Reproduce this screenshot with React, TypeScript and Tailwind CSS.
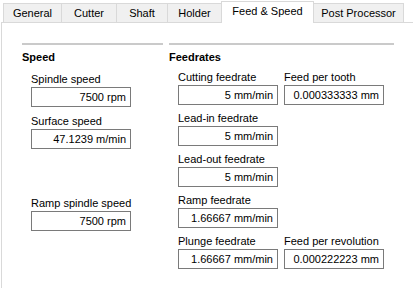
const tabs = ['General', 'Cutter', 'Shaft', 'Holder', 'Feed & Speed', 'Post Processor'];
const tabWidths: Record<string, string> = {
  General: 'w-[58px]',
  Cutter: 'w-[55px]',
  Shaft: 'w-[51px]',
  Holder: 'w-[54px]',
  'Feed & Speed': 'w-[93px]',
  'Post Processor': 'w-[90px]',
};

function Field({ label, value, className = '' }: { label: string; value: string; className?: string }) {
  return (
    <div className={className}>
      <div className="leading-[14px] h-[14px] whitespace-nowrap">{label}</div>
      <div className="mt-[1px] w-[100px] h-[20px] border border-[#7a7a7a] bg-white text-right pr-[4px] leading-[18px] whitespace-nowrap">
        {value}
      </div>
    </div>
  );
}

function Section({ title }: { title: string }) {
  return (
    <>
      <div className="h-[2px] bg-[#cacaca]" />
      <div className="mt-[5px] h-[14px] leading-[14px] font-bold">{title}</div>
    </>
  );
}

export default function App() {
  return (
    <div
      className="w-[413px] h-[288px] bg-white text-black text-[11px] overflow-hidden flex flex-col"
      style={{ fontFamily: '"Liberation Sans", Arial, sans-serif' }}
    >
      <div className="h-[22px] flex items-end pl-[3px] shrink-0">
        {tabs.map((t) => {
          const active = t === 'Feed & Speed';
          const after = t === 'Post Processor';
          return (
            <div
              key={t}
              className={`${tabWidths[t]} flex items-center justify-center border-t border-[#d9d9d9] ${
                active
                  ? 'h-[22px] -mb-px relative z-10 bg-white border-l border-r pb-[2px]'
                  : `h-[19px] bg-[#f0f0f0] ${after ? 'border-r' : 'border-l'}`
              }`}
            >
              {t}
            </div>
          );
        })}
      </div>

      <div className="flex-1 ml-[1px] border-t border-l border-[#d9d9d9] flex pl-[20px] pt-[20px] gap-[6px]">
        <div className="w-[141px]">
          <Section title="Speed" />
          <div className="pl-[9px]">
            <Field label="Spindle speed" value="7500 rpm" className="mt-[8px]" />
            <Field label="Surface speed" value="47.1239 m/min" className="mt-[7px]" />
            <Field label="Ramp spindle speed" value="7500 rpm" className="mt-[47px]" />
          </div>
        </div>

        <div className="w-[225px]">
          <Section title="Feedrates" />
          <div className="pl-[9px] flex flex-col gap-[6px] mt-[6px]">
            <div className="flex gap-[6px]">
              <Field label="Cutting feedrate" value="5 mm/min" />
              <Field label="Feed per tooth" value="0.000333333 mm" />
            </div>
            <Field label="Lead-in feedrate" value="5 mm/min" />
            <Field label="Lead-out feedrate" value="5 mm/min" />
            <Field label="Ramp feedrate" value="1.66667 mm/min" />
            <div className="flex gap-[6px]">
              <Field label="Plunge feedrate" value="1.66667 mm/min" />
              <Field label="Feed per revolution" value="0.000222223 mm" />
            </div>
          </div>
        </div>
      </div>
    </div>
  );
}
